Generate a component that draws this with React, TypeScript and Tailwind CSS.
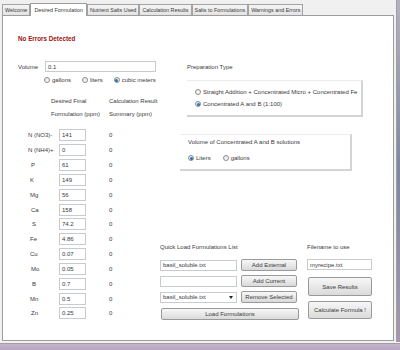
import React from 'react';

const font = { fontFamily: '"Liberation Sans", Arial, sans-serif' };

const tabs = [
  'Welcome',
  'Desired Formulation',
  'Nutrient Salts Used',
  'Calculation Results',
  'Salts to Formulations',
  'Warnings and Errors',
];

const nutrients: [string, string, string][] = [
  ['N (NO3)-', '141', 'pl-[1px]'],
  ['N (NH4)+', '0', 'pl-[1px]'],
  ['P', '61', 'pl-[4px]'],
  ['K', '149', 'pl-[3px]'],
  ['Mg', '56', 'pl-[3px]'],
  ['Ca', '158', 'pl-[4px]'],
  ['S', '74.2', 'pl-[5px]'],
  ['Fe', '4.86', 'pl-[3px]'],
  ['Cu', '0.07', 'pl-[3px]'],
  ['Mo', '0.05', 'pl-[4px]'],
  ['B', '0.7', 'pl-[5px]'],
  ['Mn', '0.5', 'pl-[3px]'],
  ['Zn', '0.25', 'pl-[4px]'],
];

const Radio = ({ checked, label }: { checked?: boolean; label: string }) => (
  <div className="flex items-center gap-[2px]">
    <span className="w-[6px] h-[6px] rounded-full border border-[#8c8c8c] bg-gradient-to-br from-[#e6e6e6] to-white flex items-center justify-center">
      {checked && <span className="w-[3px] h-[3px] rounded-full bg-[#1f6fbf]" />}
    </span>
    <span>{label}</span>
  </div>
);

const Field = ({ value, className }: { value: string; className: string }) => (
  <div className={`bg-white border border-[#c6cbd0] flex items-center pl-[2px] ${className}`}>{value}</div>
);

const Button = ({ label, className }: { label: string; className: string }) => (
  <div
    className={`border border-[#9a9a9a] rounded-[2px] bg-gradient-to-b from-[#f7f7f7] to-[#dadada] flex items-center justify-center ${className}`}
  >
    {label}
  </div>
);

export default function App() {
  return (
    <div className="w-[400px] h-[350px] flex flex-col bg-[#f0f0f0] text-[6px] leading-[8px] text-[#3a3a3a] overflow-hidden" style={font}>
      <div className="flex flex-1 min-h-0">
        <div className="flex-1 flex flex-col pl-[2px] pt-[3px] pb-[1px]">
          {/* tab strip */}
          <div className="flex items-end h-[12px] text-[5.4px]">
            {tabs.map((t, i) =>
              i === 1 ? (
                <div key={t} className="h-[13px] px-[3px] bg-white border border-b-0 border-[#9c9c9c] flex items-center -mb-[1px] relative z-10">
                  {t}
                </div>
              ) : (
                <div key={t} className="h-[11px] px-[2px] bg-gradient-to-b from-[#f5f5f5] to-[#e3e3e3] border border-b-0 border-[#a3a3a3] flex items-center">
                  {t}
                </div>
              ),
            )}
          </div>

          {/* panel */}
          <div className="flex-1 bg-white border border-[#9c9c9c] flex">
            {/* left column */}
            <div className="w-[156px] flex flex-col">
              <div className="mt-[19px] ml-[15px] font-bold text-[#a01010] text-[6.3px]">No Errors Detected</div>
              <div className="mt-[18px] ml-[15px] flex items-center h-[11px]">
                <span className="w-[27px]">Volume</span>
                <Field value="0.1" className="w-[111px] h-[11px]" />
              </div>
              <div className="mt-[4px] ml-[41px] flex gap-[11px] h-[8px]">
                <Radio label="gallons" />
                <Radio label="liters" />
                <Radio checked label="cubic meters" />
              </div>
              <div className="mt-[11px] flex leading-[13px]">
                <div className="ml-[48px] w-[58px]">
                  <div>Desired Final</div>
                  <div>Formulation (ppm)</div>
                </div>
                <div>
                  <div>Calculation Result</div>
                  <div>Summary (ppm)</div>
                </div>
              </div>
              <div className="mt-[7px] flex flex-col">
                {nutrients.map(([name, val, pad]) => (
                  <div key={name} className="h-[14.83px] flex items-center">
                    <span className={`ml-[24px] w-[32px] ${pad}`}>{name}</span>
                    <Field value={val} className="w-[27px] h-[12px]" />
                    <span className="ml-[23px]">0</span>
                  </div>
                ))}
              </div>
            </div>

            {/* right column */}
            <div className="flex-1 flex flex-col">
              <div className="mt-[47px] ml-[28px]">Preparation Type</div>
              <div className="mt-[9px] ml-[28px] w-[176px] h-[37px] border-r-2 border-b-2 border-[#d4d4d4] border-t border-t-[#ececec] flex flex-col justify-center gap-[4px] pl-[8px]">
                <Radio label="Straight Addition + Concentrated Micro + Concentrated Fe" />
                <Radio checked label="Concentrated A and B (1:100)" />
              </div>
              <div className="mt-[17px] ml-[21px] w-[172px] h-[37px] border-r-2 border-b-2 border-[#d4d4d4] border-t border-t-[#ececec] flex flex-col pl-[8px] pt-[3px]">
                <div>Volume of Concentrated A and B solutions</div>
                <div className="mt-[8px] flex gap-[12px]">
                  <Radio checked label="Liters" />
                  <Radio label="gallons" />
                </div>
              </div>

              <div className="mt-[72px] ml-[1px] flex">
                <div className="w-[147px] flex flex-col">
                  <div>Quick Load Formulations List</div>
                  <div className="mt-[8px] flex items-center gap-[4px]">
                    <Field value="basil_soluble.txt" className="w-[77px] h-[11px]" />
                    <Button label="Add External" className="w-[56px] h-[12px]" />
                  </div>
                  <div className="mt-[4px] flex items-center gap-[4px]">
                    <Field value="" className="w-[77px] h-[11px]" />
                    <Button label="Add Current" className="w-[56px] h-[12px]" />
                  </div>
                  <div className="mt-[4px] flex items-center gap-[4px]">
                    <div className="w-[77px] h-[11px] bg-white border border-[#c6cbd0] flex items-center pl-[2px] pr-[3px] justify-between">
                      <span>basil_soluble.txt</span>
                      <span className="w-0 h-0 border-l-[2px] border-r-[2px] border-t-[3px] border-l-transparent border-r-transparent border-t-[#222]" />
                    </div>
                    <Button label="Remove Selected" className="w-[56px] h-[12px]" />
                  </div>
                  <Button label="Load Formulations" className="mt-[5px] ml-[1px] w-[138px] h-[12px]" />
                </div>
                <div className="flex flex-col">
                  <div>Filename to use</div>
                  <Field value="myrecipe.txt" className="mt-[8px] w-[65px] h-[11px]" />
                  <Button label="Save Results" className="mt-[7px] ml-[1px] w-[64px] h-[19px]" />
                  <Button label="Calculate Formula !" className="mt-[5px] ml-[1px] w-[64px] h-[18px]" />
                </div>
              </div>
            </div>
          </div>
        </div>
        {/* window frame right */}
        <div className="w-[6px] flex">
          <div className="w-[2px] bg-[#f0f0f0]" />
          <div className="w-[1px] bg-[#a0a0a0]" />
          <div className="flex-1 bg-gradient-to-b from-[#b6b0c4] via-[#7d889c] to-[#a597b0]" />
        </div>
      </div>
      {/* window frame bottom */}
      <div className="h-[1px] bg-[#f0f0f0]" />
      <div className="h-[1px] bg-[#a0a0a0]" />
      <div className="h-[6px] bg-gradient-to-b from-[#c4b4cc] to-[#b8a4c0]" />
    </div>
  );
}
